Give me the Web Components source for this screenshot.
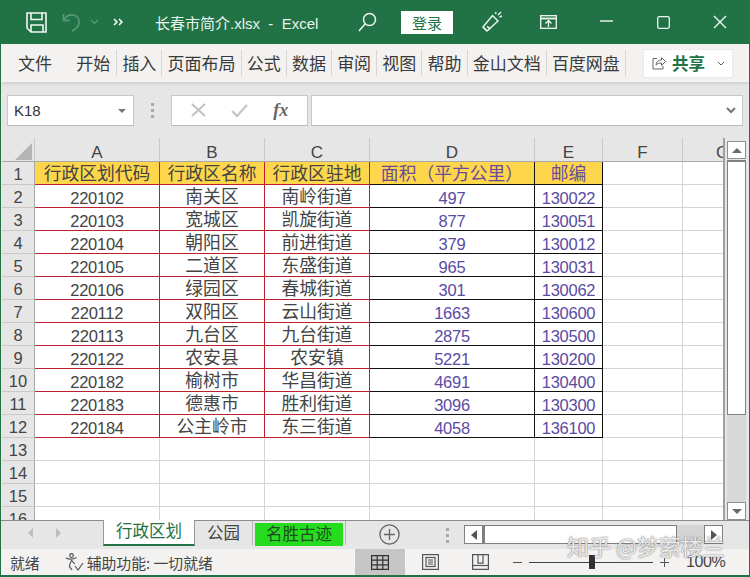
<!DOCTYPE html>
<html lang="zh"><head><meta charset="utf-8"><title>Excel</title>
<style>
html,body{margin:0;padding:0;width:750px;height:577px;overflow:hidden;background:#e6e6e6}
body{font-family:"Liberation Sans","Noto Sans CJK SC",sans-serif}
</style></head><body>
<xl-app></xl-app>
<script>
const CJK='"Noto Sans CJK SC",sans-serif';
function def(name,css,html,after){
  customElements.define(name,class extends HTMLElement{
    constructor(){super();const r=this.attachShadow({mode:'open'});r.innerHTML='<style>'+css+'</style>'+html;if(after)after(r,this);}
  });
}
def('xl-titlebar',`
:host{display:flex;align-items:center;height:44px;background:#217346;color:#fff;font:15px "Liberation Sans",${CJK};flex:none}
svg{display:block;flex:none}
.t{margin-left:32px;width:170px;white-space:pre;color:#e9f2ec;font-size:15px}
.login{margin-left:24px;width:52px;height:23px;background:#fff;color:#217346;display:flex;align-items:center;justify-content:center;font-size:15px;flex:none}
`,`
<svg style="margin-left:25px" width="21" height="21" viewBox="0 0 21 21" fill="none" stroke="#f2f7f4" stroke-width="1.6"><path d="M1 1h19v19H5l-4-4z"/><path d="M5 1v6.5h11V1"/><path d="M5 20v-7h12v7"/></svg>
<svg style="margin-left:15px" width="19" height="20" viewBox="0 0 19 20" fill="none" stroke="#5b9b78" stroke-width="1.6"><path d="M1.5 2v6.5H8"/><path d="M2 8C4 4 7.5 2.5 11 3c4 .7 6.5 4 6 8-.4 3-3 6-7 8"/></svg>
<svg style="margin-left:9px" width="9" height="6" viewBox="0 0 9 6" fill="none" stroke="#5b9b78" stroke-width="1.2"><path d="M1 1l3.5 3.5L8 1"/></svg>
<svg style="margin-left:14px" width="10" height="8" viewBox="0 0 10 8" fill="none" stroke="#fff" stroke-width="1.5"><path d="M1 1l3 3-3 3M6 1l3 3-3 3"/></svg>
<span class="t">长春市简介.xlsx  -  Excel</span>
<svg style="margin-left:33px" width="19" height="20" viewBox="0 0 19 20" fill="none" stroke="#f2f7f4" stroke-width="1.5"><circle cx="11.5" cy="7.5" r="6"/><path d="M7 12l-6 7"/></svg>
<span class="login">登录</span>
<svg style="margin-left:29px" width="21" height="22" viewBox="0 0 21 22" fill="none" stroke="#f2f7f4" stroke-width="1.4"><path d="M1 16L10.5 4.500l5.500 5.500L5 20z"/><path d="M5 20c-1-1-3-3-4-4"/><path d="M5 15.500c1.500.4 2.500 1.500 3 3"/><path d="M16 4l3-3M17.500 6l2.500-1M13.500 3l.5-2"/></svg>
<svg style="margin-left:37px" width="17" height="14" viewBox="0 0 17 14" fill="none" stroke="#f2f7f4" stroke-width="1.3"><rect x=".7" y=".7" width="15.6" height="12.6"/><path d="M.7 3.500h15.600" stroke-width="1.8"/><path d="M8.500 12V6M5.500 8.500l3-3 3 3"/></svg>
<svg style="margin-left:43px;margin-top:-2px" width="13" height="2" viewBox="0 0 13 2"><path d="M0 1h13" stroke="#f2f7f4" stroke-width="1.4"/></svg>
<svg style="margin-left:44px" width="13" height="13" viewBox="0 0 13 13" fill="none" stroke="#f2f7f4" stroke-width="1.3"><rect x=".7" y=".7" width="11.6" height="11.6" rx="1.5"/></svg>
<svg style="margin-left:43px" width="14" height="14" viewBox="0 0 14 14" fill="none" stroke="#f2f7f4" stroke-width="1.4"><path d="M1 1l12 12M13 1L1 13"/></svg>
`);
def('xl-ribbon-tab',`
:host{display:flex;align-items:center;height:26px;padding:0 5.1px 2px;box-sizing:border-box;border-right:1px solid #d8d6d4;font-size:17px;color:#3a3a3a;white-space:nowrap}
:host([plain]){border-right:none}
`,`<slot></slot>`);
def('xl-ribbon',`
:host{display:flex;align-items:center;height:38px;background:#f3f2f1;flex:none;box-shadow:0 2px 3px rgba(0,0,0,.10);position:relative;z-index:1;font-family:${CJK}}
.share{margin-left:17px;width:90px;height:29px;background:#fff;border:1px solid #ebe9e7;box-sizing:border-box;display:flex;align-items:center;color:#217346;font-weight:700;font-size:16.5px}
svg{display:block;flex:none}
`,`
<xl-ribbon-tab plain style="margin-left:12px">文件</xl-ribbon-tab>
<xl-ribbon-tab style="margin-left:14px;padding-right:6px">开始</xl-ribbon-tab>
<xl-ribbon-tab>插入</xl-ribbon-tab>
<xl-ribbon-tab>页面布局</xl-ribbon-tab>
<xl-ribbon-tab>公式</xl-ribbon-tab>
<xl-ribbon-tab>数据</xl-ribbon-tab>
<xl-ribbon-tab>审阅</xl-ribbon-tab>
<xl-ribbon-tab>视图</xl-ribbon-tab>
<xl-ribbon-tab>帮助</xl-ribbon-tab>
<xl-ribbon-tab>金山文档</xl-ribbon-tab>
<xl-ribbon-tab>百度网盘</xl-ribbon-tab>
<div class="share">
<svg style="margin-left:8px" width="14" height="14" viewBox="0 0 14 14" fill="none" stroke="#666" stroke-width="1"><path d="M5 2.500H1v10.500h10v-3"/><path d="M4 9c0-3 2.500-5 5.500-5V1.500L13.500 5.500 9.500 9.500V7C7.500 7 5.500 7.500 4 9z"/></svg>
<span style="margin-left:6px">共享</span>
<svg style="margin-left:12px" width="8" height="5" viewBox="0 0 8 5" fill="none" stroke="#555" stroke-width="1"><path d="M1 1l3 3 3-3"/></svg>
</div>`);
def('xl-formula-bar',`
:host{display:flex;align-items:center;height:56px;background:#e6e6e6;flex:none;box-sizing:border-box;padding:0 6px}
.box{height:31px;box-sizing:border-box;background:#fff;border:1px solid #c8c8c8;border-bottom-color:#bbb;display:flex;align-items:center;flex:none}
.name{width:127px;padding:1px 7px 0 6px;font:15px "Liberation Sans",sans-serif;color:#333;justify-content:space-between}
.tri{width:0;height:0;border:4px solid transparent;border-top:4.5px solid #777;border-bottom:0}
.dots{width:37px;display:flex;flex-direction:column;gap:3px;align-items:center;flex:none}
.dots i{width:3px;height:3px;background:#aaa;display:block}
.fn{width:137px;justify-content:space-around;padding:0 6px}
.fx{font:italic 700 18px "Liberation Serif",serif;color:#666}
.in{width:432px;margin-left:3px;justify-content:flex-end;padding-right:6px}
svg{display:block}
`,`
<div class="box name"><span>K18</span><span class="tri"></span></div>
<div class="dots"><i></i><i></i><i></i></div>
<div class="box fn">
<svg width="15" height="14" viewBox="0 0 15 14" fill="none" stroke="#c4c4c4" stroke-width="2.2"><path d="M1 1l13 12M14 1L1 13"/></svg>
<svg width="17" height="14" viewBox="0 0 17 14" fill="none" stroke="#c4c4c4" stroke-width="2.2"><path d="M1 8l5 5L16 2"/></svg>
<span class="fx">fx</span></div>
<div class="box in"><svg width="10" height="7" viewBox="0 0 10 7" fill="none" stroke="#777" stroke-width="2"><path d="M1 1l4 4 4-4"/></svg></div>`);
const DATA=[
['220102','南关区','南岭街道','497','130022'],
['220103','宽城区','凯旋街道','877','130051'],
['220104','朝阳区','前进街道','379','130012'],
['220105','二道区','东盛街道','965','130031'],
['220106','绿园区','春城街道','301','130062'],
['220112','双阳区','云山街道','1663','130600'],
['220113','九台区','九台街道','2875','130500'],
['220122','农安县','农安镇','5221','130200'],
['220182','榆树市','华昌街道','4691','130400'],
['220183','德惠市','胜利街道','3096','130300'],
['220184','公主岭市','东三街道','4058','136100']];
const HEAD=['行政区划代码','行政区名称','行政区驻地','面积（平方公里）','邮编'];
def('xl-grid',`
:host{display:block;flex:none;width:721px;height:382px;overflow:hidden;border-right:2px solid #a0a0a0;background:#fff}
.g{display:grid;grid-template-columns:33px 125px 105px 105px 165px 68px 80px 80px;grid-template-rows:24px;grid-auto-rows:23px;font:16.5px "Liberation Sans",${CJK};letter-spacing:-.25px;color:#444}
.c{box-sizing:border-box;padding-top:4px;border-right:1px solid #d4d4d4;border-bottom:1px solid #d4d4d4;display:flex;align-items:center;justify-content:center;white-space:nowrap;overflow:hidden;line-height:19px;background:#fff}
.ch{background:#e6e6e6;border-right:1px solid #c8c8c8;border-bottom:1px solid #a8a8a8;font-size:17px;color:#444;padding-top:5px;letter-spacing:0}
.rh{background:#e6e6e6;border-right:1px solid #a8a8a8;border-bottom:1px solid #c8c8c8;font-size:16.5px;color:#444;padding-top:3px;letter-spacing:0}
.corner{background:#e6e6e6;border-right:1px solid #c8c8c8;border-bottom:1px solid #a8a8a8;display:block;padding:5px 0 0 13px}
.corner svg{display:block}
.h{background:#fdd64c;font-size:17.8px;letter-spacing:0;padding-top:3px}
.r{border-color:#bd1f2d}
.k{border-color:#111;color:#5a4ba2}
.h.k{color:#6a4a9c}
.cj{font-size:17.8px;color:#444;letter-spacing:0;padding-top:3px}
`,`<div class="g" id="g"></div>`,(r)=>{
  const g=r.getElementById('g');let s='<div class="c corner"><svg width="17" height="17" viewBox="0 0 17 17"><path d="M17 0v17H0z" fill="#b4b4b4"/></svg></div>';
  'ABCDEFG'.split('').forEach(l=>s+=`<div class="c ch">${l}</div>`);
  for(let i=1;i<=16;i++){
    s+=`<div class="c rh">${i}</div>`;
    for(let j=0;j<7;j++){
      let t='',cl='c';
      if(i===1&&j<5){t=HEAD[j];cl+=' h '+(j<3?'r':'k');}
      else if(i>=2&&i<=12&&j<5){t=DATA[i-2][j];cl+=' '+(j<3?'r':'k');if(j===1||j===2)cl+=' cj';}
      s+=`<div class="${cl}">${t}</div>`;
    }
  }
  g.innerHTML=s;
});
def('xl-vscroll',`
:host{display:flex;flex-direction:column;width:19px;margin-left:2px;flex:none;height:382px;box-sizing:border-box;padding-top:3px}
.b{height:18px;background:#fff;border:1px solid #909090;box-sizing:border-box;display:flex;align-items:center;justify-content:center;flex:none}
.u{width:0;height:0;border:5px solid transparent;border-bottom:5px solid #6a6a6a;border-top:0}
.d{width:0;height:0;border:5px solid transparent;border-top:5px solid #6a6a6a;border-bottom:0}
.t{height:255px;margin-top:1px;background:#fff;border:1px solid #808080;border-top-width:2px;box-sizing:border-box;flex:none}
.s{flex:1;background:#d8d8d8}
`,`<div class="b"><i class="u"></i></div><div class="t"></div><div class="s"></div><div class="b"><i class="d"></i></div>`);
def('xl-sheet',`
:host{display:flex;height:382px;flex:none;background:#e6e6e6;padding-left:1px}
`,`<xl-grid></xl-grid><xl-vscroll></xl-vscroll>`);
def('xl-sheet-tabs',`
:host{display:flex;height:29px;background:#e6e6e6;flex:none;align-items:flex-start;border-top:1px solid #8c8c8c;box-sizing:border-box;font:16.5px ${CJK};position:relative;z-index:1}
svg{display:block;flex:none}
.nav{width:102px;height:24px;display:flex;align-items:center;flex:none;padding-left:27px;box-sizing:border-box;gap:23px}
.nav i{width:0;height:0;border:5px solid transparent;display:block}
.l{border-right:5px solid #bdbdbd!important;border-left:0!important}
.ri{border-left:5px solid #bdbdbd!important;border-right:0!important}
.active{width:92px;height:26px;padding-bottom:4px;background:#fff;border-bottom:2px solid #217346;border-left:1px solid #999;border-right:1px solid #999;margin-top:-1px;box-sizing:border-box;color:#217346;display:flex;align-items:center;justify-content:center;flex:none}
.p{width:58px;height:24px;padding-bottom:3px;box-sizing:border-box;display:flex;align-items:center;justify-content:center;color:#444;flex:none;border-right:1px solid #b8b8b8}
.g{width:88px;height:23px;padding-bottom:3px;box-sizing:border-box;background:#25dc1f;margin-left:2px;display:flex;align-items:center;justify-content:center;color:#1f4d1f;flex:none;margin-top:2px}
.sep{width:1px;height:24px;background:#b8b8b8;margin-left:2px;flex:none}
.hs{display:flex;align-items:stretch;height:19px;margin-top:4px;flex:none;margin-left:15px}
.b{width:19px;background:#fff;border:1px solid #808080;box-sizing:border-box;display:flex;align-items:center;justify-content:center}
.thumb{width:194px;background:#fff;border:1px solid #808080;border-left-width:2px;box-sizing:border-box}
.track{width:27px;background:#d4d4d4}
.dots{display:flex;flex-direction:column;gap:3px;flex:none;margin:7px 0 0 46px}
.dots i{display:block;width:3px;height:3px;background:#aaa}
`,`
<div class="nav"><i class="l"></i><i class="ri"></i></div>
<div class="active">行政区划</div>
<div class="p">公园</div>
<div class="g">名胜古迹</div>
<div class="sep"></div>
<svg style="margin:3px 0 0 33px" width="21" height="21" viewBox="0 0 21 21" fill="none" stroke="#666" stroke-width="1.3"><circle cx="10.5" cy="10.5" r="9.6"/><path d="M10.500 5v11M5 10.500h11"/></svg>
<div class="dots"><i></i><i></i><i></i></div>
<div class="hs"><div class="b"><svg width="6" height="10" viewBox="0 0 6 10"><path d="M6 0v10L0 5z" fill="#555"/></svg></div><div class="thumb"></div><div class="track"></div><div class="b"><svg width="6" height="10" viewBox="0 0 6 10"><path d="M0 0v10l6-5z" fill="#555"/></svg></div></div>
`);
def('xl-statusbar',`
:host{display:flex;align-items:center;height:26px;background:#f3f2f1;flex:none;font:14.85px ${CJK};color:#444;white-space:nowrap}
svg{display:block;flex:none}
.view{width:50px;height:26px;background:#c6c6c6;display:flex;align-items:center;justify-content:center;flex:none;margin-left:142px}
.slider{width:124px;height:1px;background:#444;margin-left:7px;position:relative;flex:none}
.slider i{position:absolute;left:60px;top:-7px;width:6px;height:14px;background:#333}
.z{font:16px "Liberation Sans",sans-serif;margin-left:17px;color:#444;letter-spacing:-.4px}
`,`
<span style="margin-left:9px">就绪</span>
<svg style="margin-left:25px" width="19" height="19" viewBox="0 0 19 19" fill="none" stroke="#555" stroke-width="1.2"><circle cx="6.5" cy="2.5" r="1.8"/><path d="M1 5c3 1.500 7 1.500 10.500-.5M6.500 7c-.5 3-2 3.500-2 6 0 2 1.500 2 2.500 4M7 7.500c1 1.500 1.500 3 3 3.500"/><path d="M10 13l3 4 5-7"/></svg>
<span style="margin-left:3px">辅助功能: 一切就绪</span>
<div class="view"><svg width="18" height="15" viewBox="0 0 18 15" fill="none" stroke="#333" stroke-width="1.2"><path d="M.6.6h16.800v13.800H.6zM.6 5.200h16.800M.6 9.800h16.800M6.200.6v13.800M11.800.6v13.800"/></svg></div>
<svg style="margin-left:17px" width="17" height="16" viewBox="0 0 17 16" fill="none" stroke="#555" stroke-width="1.2"><rect x=".6" y=".6" width="15.8" height="14.8"/><rect x="4" y="3.5" width="9" height="9"/><path d="M6 6h5M6 8h5M6 10h5"/></svg>
<svg style="margin-left:33px" width="17" height="16" viewBox="0 0 17 16" fill="none" stroke="#555" stroke-width="1.2"><path d="M.6.600h15.800v14.800H.6zM6 .6v8.500h5V.6"/><path d="M.6 11.500h15.800"/></svg>
<svg style="margin-left:24px" width="9" height="1" viewBox="0 0 9 1"><path d="M0 .5h9" stroke="#555"/></svg>
<div class="slider"><i></i></div>
<svg style="margin-left:7px" width="9" height="9" viewBox="0 0 9 9"><path d="M0 4.500h9M4.500 0v9" stroke="#555"/></svg>
<span class="z">100%</span>`);
def('xl-app',`
:host{display:flex;flex-direction:column;width:750px;height:577px;box-sizing:border-box;border:solid #217346;border-width:0 1px 2px 1px;position:relative;overflow:hidden;background:#e6e6e6}
.wm{position:absolute;left:566px;top:529px;font:22px ${CJK};color:rgba(255,255,255,.85);text-shadow:0 0 1px #777,0 0 2px rgba(90,90,90,.6);white-space:nowrap;z-index:3}
`,`
<xl-titlebar></xl-titlebar><xl-ribbon></xl-ribbon><xl-formula-bar></xl-formula-bar>
<xl-sheet></xl-sheet><xl-sheet-tabs></xl-sheet-tabs><xl-statusbar></xl-statusbar>
<div class="wm">知乎 @梦萦楼兰</div>`);
</script>
</body></html>
